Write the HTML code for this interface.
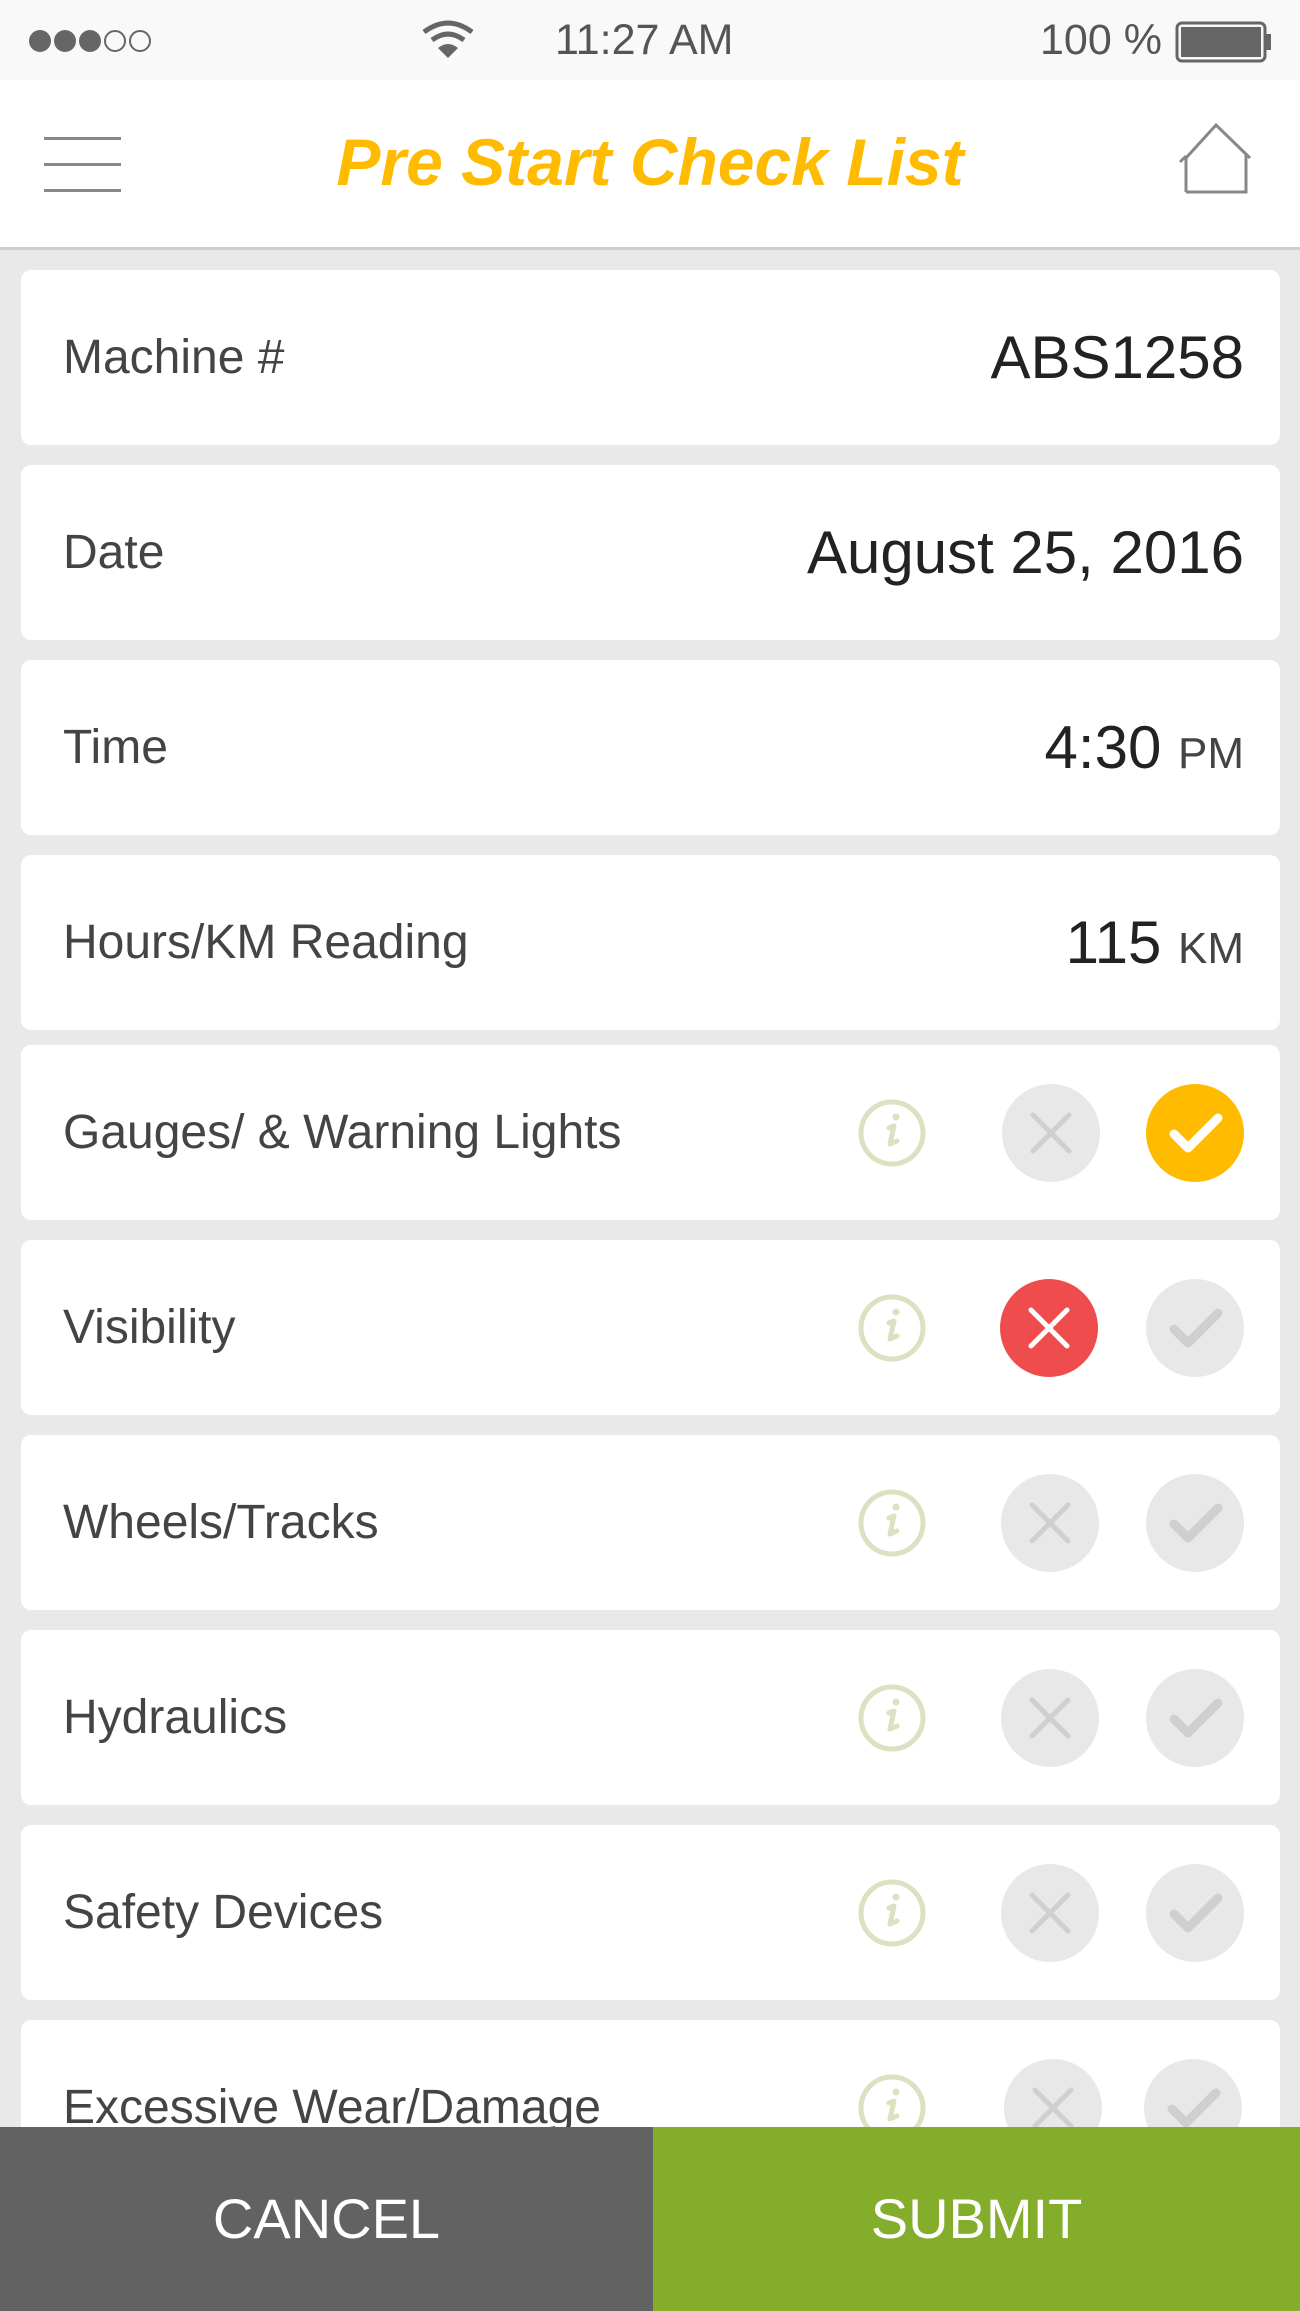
<!DOCTYPE html>
<html><head><meta charset="utf-8"><style>
*{margin:0;padding:0;box-sizing:border-box}
body{width:1300px;height:2311px;overflow:hidden;background:#e9e9e9;font-family:"Liberation Sans",sans-serif;position:relative}
.sb{position:absolute;left:0;top:0;width:1300px;height:80px;background:#f9f9f9;color:#555;font-size:43px}
.hd{position:absolute;left:0;top:80px;width:1300px;height:170px;background:#fff;border-bottom:3px solid #cfcfcf}
.title{position:absolute;left:0;width:1300px;top:44px;text-align:center;color:#ffbb00;font-style:italic;font-weight:bold;font-size:66px;letter-spacing:0px}
.card{position:absolute;left:21px;width:1259px;height:175px;background:#fff;border-radius:10px}
.lab{position:absolute;left:42px;top:0;line-height:175px;font-size:48px;color:#444;font-weight:300}
.val{position:absolute;right:36px;top:0;line-height:175px;font-size:60px;color:#222}
.val small{font-size:44px;color:#444}
.ic{position:absolute;top:38px}
.bar{position:absolute;top:2127px;height:184px;line-height:184px;text-align:center;color:#fff;font-size:56px}
</style></head><body>
<div class="sb">
<svg style="position:absolute;left:27px;top:28px" width="140" height="26"><circle cx="13" cy="13" r="11" fill="#666"/><circle cx="38" cy="13" r="11" fill="#666"/><circle cx="63" cy="13" r="11" fill="#666"/><circle cx="88" cy="13" r="10" fill="none" stroke="#666" stroke-width="2"/><circle cx="113" cy="13" r="10" fill="none" stroke="#666" stroke-width="2"/></svg>
<svg style="position:absolute;left:420px;top:20px" width="56" height="40"><path d="M4 12 Q28 -6 52 12" fill="none" stroke="#666" stroke-width="5"/><path d="M12 20 Q28 8 44 20" fill="none" stroke="#666" stroke-width="5"/><path d="M28 38 L18 28 Q28 20 38 28 Z" fill="#666"/></svg>
<div style="position:absolute;left:555px;top:16px">11:27 AM</div>
<div style="position:absolute;left:1040px;top:16px">100 %</div>
<svg style="position:absolute;left:1175px;top:21px" width="100" height="42"><rect x="2" y="2" width="88" height="38" rx="5" fill="none" stroke="#666" stroke-width="3"/><rect x="6" y="6" width="80" height="30" fill="#666"/><rect x="91" y="13" width="5" height="16" fill="#666"/></svg>
</div>
<div class="hd">
<div style="position:absolute;left:44px;top:57px;width:77px;height:3px;background:#888"></div>
<div style="position:absolute;left:44px;top:83px;width:77px;height:3px;background:#888"></div>
<div style="position:absolute;left:44px;top:109px;width:77px;height:3px;background:#888"></div>
<div class="title">Pre Start Check List</div>
<svg style="position:absolute;left:1176px;top:42px" width="80" height="72"><path d="M10 70 V36 L40 3 L74 36 M70 32 V70 H10 M4 40 L10 34" fill="none" stroke="#888" stroke-width="3"/></svg>
</div>

<div class="card" style="top:270px"><div class="lab">Machine #</div><div class="val">ABS1258</div></div>
<div class="card" style="top:465px"><div class="lab">Date</div><div class="val">August 25, 2016</div></div>
<div class="card" style="top:660px"><div class="lab">Time</div><div class="val">4:30 <small>PM</small></div></div>
<div class="card" style="top:855px"><div class="lab">Hours/KM Reading</div><div class="val">115 <small>KM</small></div></div>

<svg width="0" height="0" style="position:absolute"><defs>
<g id="info"><circle cx="50" cy="50" r="31" fill="none" stroke="#d9e2c1" stroke-width="5"/><circle cx="54" cy="34" r="3.5" fill="#d9e2c1"/><path d="M47 45 L52 43 L48 61 L55 58" fill="none" stroke="#d9e2c1" stroke-width="5" stroke-linecap="round" stroke-linejoin="round"/></g>
<g id="xg"><circle cx="50" cy="50" r="49" fill="#e8e8e8"/><path d="M32 32 L68 68 M68 32 L32 68" stroke="#cfcfcf" stroke-width="5" stroke-linecap="round"/></g>
<g id="cg"><circle cx="50" cy="50" r="49" fill="#e8e8e8"/><path d="M29 51 L43 65 L73 35" fill="none" stroke="#cfcfcf" stroke-width="9" stroke-linecap="round" stroke-linejoin="round"/></g>
<g id="xr"><circle cx="50" cy="50" r="49" fill="#ef4c4e"/><path d="M32 32 L68 68 M68 32 L32 68" stroke="#fff" stroke-width="5" stroke-linecap="round"/></g>
<g id="cy"><circle cx="50" cy="50" r="49" fill="#ffbb00"/><path d="M29 51 L43 65 L73 35" fill="none" stroke="#fff" stroke-width="9" stroke-linecap="round" stroke-linejoin="round"/></g>
</defs></svg>

<div class="card" style="top:1045px"><div class="lab">Gauges/ &amp; Warning Lights</div>
<svg class="ic" style="left:821px" width="100" height="100"><use href="#info"/></svg>
<svg class="ic" style="left:980px" width="100" height="100"><use href="#xg"/></svg>
<svg class="ic" style="left:1124px" width="100" height="100"><use href="#cy"/></svg></div>
<div class="card" style="top:1240px"><div class="lab">Visibility</div>
<svg class="ic" style="left:821px" width="100" height="100"><use href="#info"/></svg>
<svg class="ic" style="left:978px" width="100" height="100"><use href="#xr"/></svg>
<svg class="ic" style="left:1124px" width="100" height="100"><use href="#cg"/></svg></div>
<div class="card" style="top:1435px"><div class="lab">Wheels/Tracks</div>
<svg class="ic" style="left:821px" width="100" height="100"><use href="#info"/></svg>
<svg class="ic" style="left:979px" width="100" height="100"><use href="#xg"/></svg>
<svg class="ic" style="left:1124px" width="100" height="100"><use href="#cg"/></svg></div>
<div class="card" style="top:1630px"><div class="lab">Hydraulics</div>
<svg class="ic" style="left:821px" width="100" height="100"><use href="#info"/></svg>
<svg class="ic" style="left:979px" width="100" height="100"><use href="#xg"/></svg>
<svg class="ic" style="left:1124px" width="100" height="100"><use href="#cg"/></svg></div>
<div class="card" style="top:1825px"><div class="lab">Safety Devices</div>
<svg class="ic" style="left:821px" width="100" height="100"><use href="#info"/></svg>
<svg class="ic" style="left:979px" width="100" height="100"><use href="#xg"/></svg>
<svg class="ic" style="left:1124px" width="100" height="100"><use href="#cg"/></svg></div>
<div class="card" style="top:2020px"><div class="lab">Excessive Wear/Damage</div>
<svg class="ic" style="left:821px" width="100" height="100"><use href="#info"/></svg>
<svg class="ic" style="left:982px" width="100" height="100"><use href="#xg"/></svg>
<svg class="ic" style="left:1122px" width="100" height="100"><use href="#cg"/></svg></div>

<div class="bar" style="left:0;width:653px;background:#626262">CANCEL</div>
<div class="bar" style="left:653px;width:647px;background:#84ad2b">SUBMIT</div>
</body></html>
